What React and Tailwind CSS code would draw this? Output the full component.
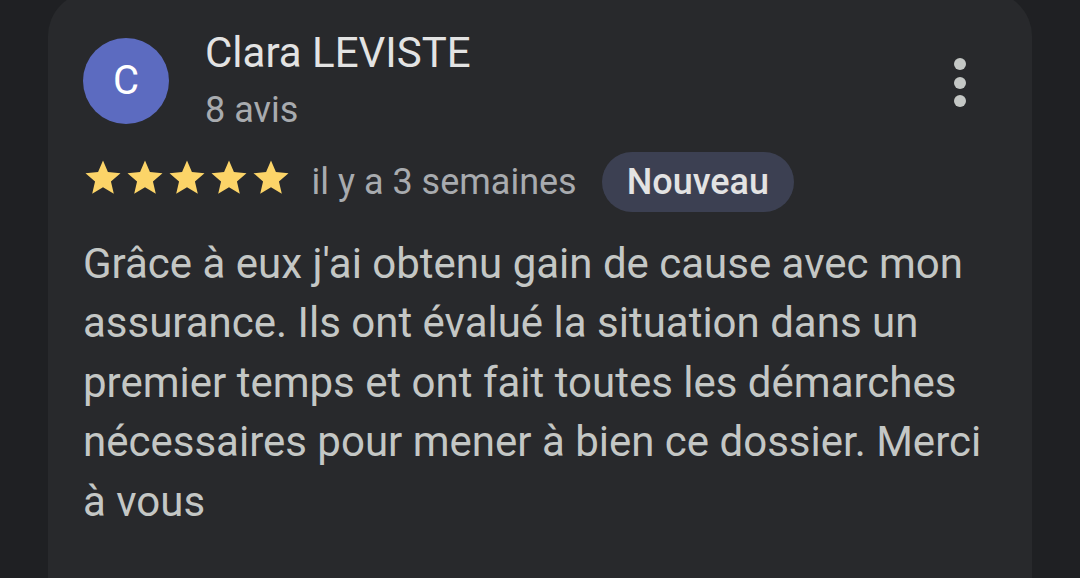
function Star() {
  return (
    <svg viewBox="0 0 24 24" className="h-[42px] w-[42px]" fill="#fcd468">
      <path d="M12 17.27L18.18 21l-1.64-7.03L22 9.24l-7.19-.61L12 2 9.19 8.63 2 9.24l5.46 4.73L5.82 21z" />
    </svg>
  );
}

export default function App() {
  return (
    <div
      className="h-[578px] w-[1080px] overflow-hidden bg-[#1f2023]"
      style={{ fontFamily: "Roboto, 'Noto Sans', sans-serif" }}
    >
      <div className="ml-[48px] -mt-[8px] h-[700px] w-[984px] rounded-[44px] bg-[#28292c] pl-[35px] pt-[36px]">
        <div className="flex items-start">
          <div className="mt-[10px] flex h-[86px] w-[86px] shrink-0 items-center justify-center rounded-full bg-[#5c6bc0] text-[40px] text-white">
            C
          </div>
          <div className="ml-[36px] flex-1">
            <div className="text-[42px] leading-[50px] text-[#e3e3e3]">Clara LEVISTE</div>
            <div className="mt-[10px] text-[36px] leading-[44px] text-[#a8abaf]">8 avis</div>
          </div>
          <div className="mr-[66px] mt-[30px] flex flex-col gap-[6.5px]">
            <span className="h-[12px] w-[12px] rounded-full bg-[#c4c7c5]" />
            <span className="h-[12px] w-[12px] rounded-full bg-[#c4c7c5]" />
            <span className="h-[12px] w-[12px] rounded-full bg-[#c4c7c5]" />
          </div>
        </div>
        <div className="mt-[20px] flex items-center">
          <div className="-ml-[1.5px] mb-[8px] flex">
            <Star />
            <Star />
            <Star />
            <Star />
            <Star />
          </div>
          <span className="ml-[20px] text-[36px] leading-[44px] text-[#a8abaf]">il y a 3 semaines</span>
          <span className="ml-[25px] flex h-[60px] items-center rounded-full bg-[#3c4052] px-[25px] text-[36px] font-medium text-[#e3e3e3]">
            Nouveau
          </span>
        </div>
        <p className="mt-[21.5px] w-[915px] text-[42px] leading-[59.5px] text-[#c4c7c5]">
          Grâce à eux j'ai obtenu gain de cause avec mon assurance. Ils ont évalué la situation dans un
          premier temps et ont fait toutes les démarches nécessaires pour mener à bien ce dossier. Merci
          à vous
        </p>
      </div>
    </div>
  );
}
